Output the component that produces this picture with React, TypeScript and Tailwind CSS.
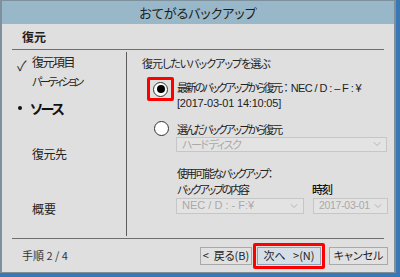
import React from "react";
import { ChevronDown } from "lucide-react";

const font = "font-['Noto_Sans_CJK_JP','Noto_Sans',sans-serif] [font-feature-settings:'palt']";
const latin = "font-['Liberation_Sans','Noto_Sans_CJK_JP',sans-serif]";

const Select = (props: any) => {
  const { text, className } = props;
  return (
    <div
      className={`flex items-center justify-between overflow-hidden whitespace-nowrap border border-[#c6c6c6] bg-[#e3e3e3] pl-[5px] pr-[3px] leading-none text-[#a9a9a9] ${className}`}
    >
      <span>{text}</span>
      <ChevronDown size={12} strokeWidth={1.5} className="shrink-0 text-[#a4a4a4]" />
    </div>
  );
};

const Button = (props: any) => {
  const { children, className } = props;
  return (
    <div
      className={`flex h-[18px] items-center justify-center whitespace-nowrap border text-[11px] leading-none text-[#1e1e1e] ${className}`}
    >
      {children}
    </div>
  );
};

export default function App() {
  return (
    <div className={`h-[277px] w-[400px] bg-[#3a78b5] ${font}`}>
      <div className="flex h-[273px] w-[396px] flex-col border-x-2 border-y border-[#7f909d] bg-[#dfdfdf]">
        {/* title bar */}
        <div className="flex h-[23px] shrink-0 items-center justify-center bg-[#98b7c9] text-[13px] text-[#1c1c1c]">
          おてがるバックアップ
        </div>

        <div className="flex h-[25px] shrink-0 items-center pl-[20px] text-[12px] font-bold text-[#1e1e1e]">
          復元
        </div>
        <div className="mx-[10px] h-px shrink-0 bg-[#6e6e6e]" />

        {/* main */}
        <div className="flex h-[188px] shrink-0 px-[10px] text-[#222]">
          {/* steps */}
          <div className="my-[2px] w-[115px] shrink-0 whitespace-nowrap border-r border-[#5c5c5c] pt-[2px]">
            <div className="flex items-start pl-[5px]">
              <span className="mt-[3px] w-[15px] text-[14px] leading-[16px] text-[#333]">✓</span>
              <span className="text-[12px] leading-[16px] tracking-[-1.5px]">復元項目</span>
            </div>
            <div className="pl-[20px] text-[11px] leading-[16px] tracking-[-2.5px]">パーティション</div>
            <div className="mt-[9px] flex items-center pl-[6px]">
              <span className="mr-[8px] h-[4px] w-[4px] rounded-full bg-[#111]" />
              <span className="text-[14px] font-bold leading-[20px] tracking-[-2px] text-[#111]">ソース</span>
            </div>
            <div className="mt-[28px] pl-[20px] text-[12px] leading-[16px] tracking-[-0.5px]">復元先</div>
            <div className="mt-[39px] pl-[20px] text-[12px] leading-[16px]">概要</div>
          </div>

          {/* options */}
          <div className="flex-1 whitespace-nowrap pt-[5px] text-[11px]">
            <div className="pl-[15px] leading-[16px] tracking-[-1px]">復元したいバックアップを選ぶ</div>

            <div className="mt-[6px] flex items-start">
              <div className="ml-[20px] flex h-[24px] w-[27px] shrink-0 items-center justify-center rounded-[2px] border-[3px] border-[#ff0000]">
                <div className="flex h-[15px] w-[15px] items-center justify-center rounded-full border border-[#333] bg-white">
                  <div className="h-[8px] w-[8px] rounded-full bg-black" />
                </div>
              </div>
              <div className="ml-[3px] mt-[4px]">
                <div className="leading-[12px]">
                  <span className="tracking-[-2.2px]">最新のバックアップから復元</span>
                  <span className="mx-[2px]">：</span>
                  <span className={`${latin} tracking-[-0.6px]`}>NEC / D : – F : ¥</span>
                </div>
                <div className={`${latin} mt-[1.5px] leading-[14px] tracking-[-0.2px]`}>[2017-03-01 14:10:05]</div>
              </div>
            </div>

            <div className="mt-[11px] flex h-[16px] items-center">
              <div className="ml-[27px] h-[15px] w-[15px] shrink-0 rounded-full border border-[#333] bg-white" />
              <span className="ml-[8px] leading-[16px] tracking-[-2.2px]">選んだバックアップから復元</span>
            </div>
            <Select text="ハード ディスク" className="ml-[49px] h-[15px] w-[211px] text-[11px] tracking-[-1.5px]" />

            <div className="ml-[50px] mt-[13px] leading-[16px] tracking-[-2px]">使用可能なバックアップ：</div>
            <div className="ml-[50px] flex leading-[16px]">
              <span className="w-[135px] tracking-[-2.2px]">バックアップの内容</span>
              <span className="font-medium tracking-[-1px] text-[#111]">時刻</span>
            </div>
            <div className="ml-[49px] mt-px flex gap-[9px]">
              <Select text="NEC / D : - F:¥" className={`${latin} h-[16px] w-[128px] text-[11px]`} />
              <Select text="2017-03-01" className={`${latin} h-[16px] w-[75px] text-[10.5px] tracking-[-0.3px]`} />
            </div>
          </div>
        </div>

        <div className="mx-[10px] h-px shrink-0 bg-[#6e6e6e]" />

        {/* footer */}
        <div className="flex flex-1 items-center pl-[20px] pr-[6px]">
          <span className="text-[11px] text-[#333]">手順 2 / 4</span>
          <div className="ml-auto flex items-center">
            <Button className="w-[52px] border-[#a9a9a9] bg-[#e1e1e1]">&lt;&nbsp; 戻る(B)</Button>
            <div className="ml-px flex h-[26px] w-[72px] items-center justify-center rounded-[2px] border-[3px] border-[#ff0000]">
              <Button className="w-[64px] border-[#8aa3bb] bg-[#d6dee6]">次へ&nbsp;&nbsp; &gt;(N)</Button>
            </div>
            <Button className="ml-[4px] w-[59px] border-[#a9a9a9] bg-[#e1e1e1]">キャンセル</Button>
          </div>
        </div>
      </div>
    </div>
  );
}
